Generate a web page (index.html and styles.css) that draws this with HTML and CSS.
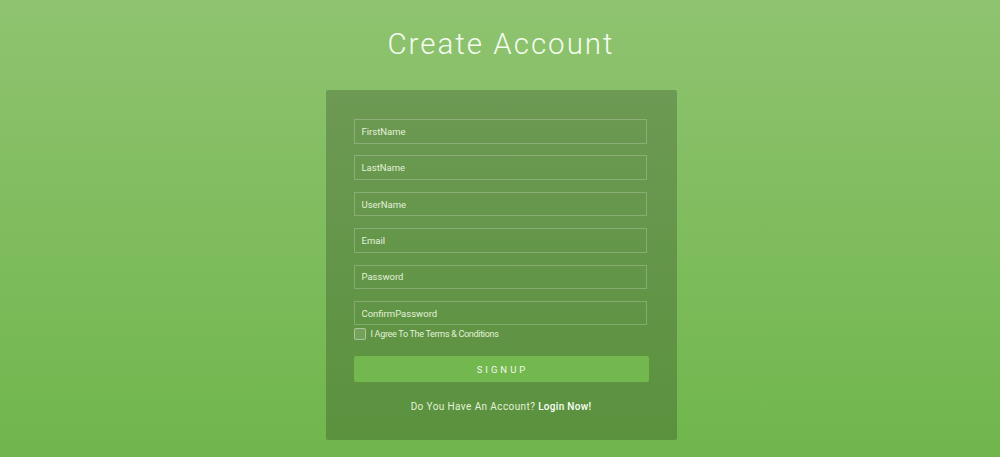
FILE: index.html
```html
<!DOCTYPE html>
<html>
<head>
<meta charset="utf-8">
<link rel="stylesheet" href="styles.css">
</head>
<body>
<div class="page">
  <h1 class="title">Create Account</h1>
  <form class="card">
    <input class="field" type="text" placeholder="FirstName">
    <input class="field" type="text" placeholder="LastName">
    <input class="field" type="text" placeholder="UserName">
    <input class="field" type="text" placeholder="Email">
    <input class="field" type="password" placeholder="Password">
    <input class="field" type="password" placeholder="ConfirmPassword">
    <label class="agree"><span class="box"></span><span>I Agree To The Terms &amp; Conditions</span></label>
    <button class="btn" type="button">SIGNUP</button>
    <p class="login">Do You Have An Account? <b>Login Now!</b></p>
  </form>
</div>
</body>
</html>
```
FILE: styles.css
```css
html, body { margin: 0; height: 100%; }
body {
  background: linear-gradient(to bottom, #8fc370 0%, #70b64c 100%);
  font-family: Roboto, "Liberation Sans", sans-serif;
  color: #fff;
}
.page {
  display: flex;
  flex-direction: column;
  align-items: center;
  padding-top: 25px;
  padding-left: 2px;
}
.title {
  margin: 0;
  font-weight: 300;
  font-size: 29.5px;
  letter-spacing: 2px;
  line-height: 38px;
  color: #f4fbef;
}
.card {
  margin-top: 27px;
  width: 351px;
  height: 350px;
  box-sizing: border-box;
  padding: 29px 28px 0 28px;
  background: rgba(0, 0, 0, 0.2);
  border-radius: 2px;
  display: flex;
  flex-direction: column;
}
.field {
  display: block;
  height: 24.5px;
  box-sizing: border-box;
  margin: 0 0 11.9px 0;
  width: 293px;
  padding: 0 7px;
  background: transparent;
  border: 1px solid rgba(255, 255, 255, 0.22);
  font-family: Roboto, "Liberation Sans", sans-serif;
  font-size: 9.5px;
  color: #e6f3dc;
  outline: none;
}
.field::placeholder { color: #e2f1d8; opacity: 1; }
.field:nth-of-type(6) { margin-bottom: 2px; }
.agree {
  display: flex;
  align-items: center;
  gap: 5px;
  font-size: 9px;
  letter-spacing: -0.3px;
  color: #e2f1d8;
  height: 14px;
}
.box {
  width: 10px;
  height: 10px;
  border: 1px solid rgba(255, 255, 255, 0.4);
  background: rgba(255, 255, 255, 0.12);
  border-radius: 2px;
}
.btn {
  margin-top: 15px;
  width: 295px;
  height: 26px;
  border: none;
  border-radius: 2px;
  background: #73b74f;
  color: #f0f8ea;
  font-family: Roboto, "Liberation Sans", sans-serif;
  font-size: 9.5px;
  letter-spacing: 3px;
  padding: 0 0 0 3px;
}
.login {
  margin: 19px 0 0 0;
  text-align: center;
  font-size: 10px;
  letter-spacing: 0.4px;
  color: #e2f1d8;
}
.login b { color: #fafff6; font-weight: 500; letter-spacing: 0.3px; }
```
